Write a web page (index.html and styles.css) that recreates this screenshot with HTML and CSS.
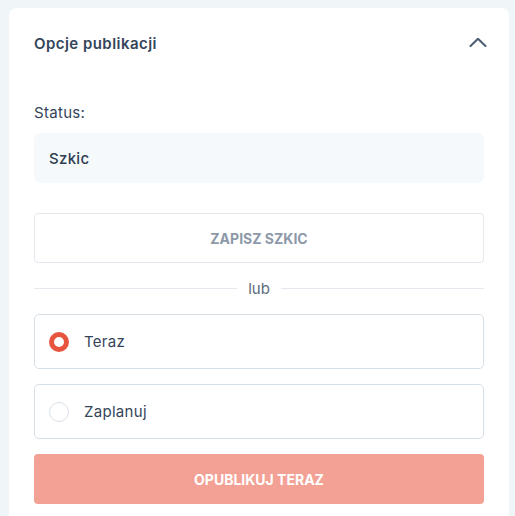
FILE: index.html
```html
<!DOCTYPE html>
<html lang="pl">
<head>
<meta charset="utf-8">
<link rel="stylesheet" href="styles.css">
</head>
<body>
<div class="card">
  <div class="card-head">
    <h2 class="title">Opcje publikacji</h2>
    <svg class="chev" width="18" height="10" viewBox="0 0 18 10"><path d="M1.5 9 L9 1.8 L16.5 9" fill="none" stroke="#4a5d73" stroke-width="2" stroke-linecap="round" stroke-linejoin="round"/></svg>
  </div>
  <div class="body">
    <label class="label">Status:</label>
    <div class="select">Szkic</div>
    <button class="btn-outline">ZAPISZ SZKIC</button>
    <div class="divider"><span>lub</span></div>
    <div class="option"><span class="radio checked"></span><span class="opt-text">Teraz</span></div>
    <div class="option"><span class="radio"></span><span class="opt-text">Zaplanuj</span></div>
    <button class="btn-primary">OPUBLIKUJ TERAZ</button>
  </div>
</div>
</body>
</html>
```
FILE: styles.css
```css
* { box-sizing: border-box; }
html, body { margin: 0; padding: 0; }
body {
  background: #f0f5f8;
  font-family: Inter, "Open Sans", sans-serif;
  color: #34455a;
  padding: 8px 6px 0 9px;
}
.card {
  background: #fff;
  border-radius: 8px 8px 0 0;
  width: 500px;
  height: 520px;
  padding: 0 25px;
}
.card-head {
  display: flex;
  justify-content: space-between;
  align-items: center;
  height: 70px;
}
.title {
  margin: 0;
  font-size: 15px;
  font-weight: 600;
  letter-spacing: 0.45px;
  color: #34455a;
}
.chev { margin-right: -3px; margin-top: -2px; }
.body { display: flex; flex-direction: column; padding-top: 24px; }
.label { font-size: 15px; color: #34455a; line-height: 22px; letter-spacing: 0.3px; }
.select {
  margin-top: 9px;
  height: 50px;
  background: #f5f9fc;
  border-radius: 7px;
  display: flex;
  align-items: center;
  padding-left: 15px;
  font-size: 15px;
  font-weight: 500;
  letter-spacing: 0.3px;
  color: #2e3d4f;
}
.btn-outline {
  margin-top: 30px;
  height: 50px;
  border: 1px solid #e3e9ee;
  border-radius: 4px;
  background: #fff;
  font-family: inherit;
  font-size: 14px;
  font-weight: 700;
  color: #8d99a8;
}
.divider {
  display: flex;
  align-items: center;
  gap: 11px;
  height: 51px;
  font-size: 15px;
  color: #5b6b7c;
}
.divider::before, .divider::after {
  content: "";
  flex: 1;
  height: 1px;
  background: #e3e9ee;
}
.option {
  height: 55px;
  border: 1px solid #d7dfe7;
  border-radius: 5px;
  display: flex;
  align-items: center;
  padding-left: 14px;
  gap: 15px;
  margin-bottom: 15px;
}
.radio {
  width: 20px;
  height: 20px;
  border-radius: 50%;
  border: 1.5px solid #d9e1e8;
}
.radio.checked { border: 5px solid #e8553f; }
.opt-text { font-size: 15px; color: #34455a; letter-spacing: 0.3px; }
.btn-primary {
  height: 50px;
  border: 0;
  border-radius: 4px;
  background: #f4a195;
  color: #fff;
  font-family: inherit;
  font-size: 14px;
  font-weight: 700;
}
```
